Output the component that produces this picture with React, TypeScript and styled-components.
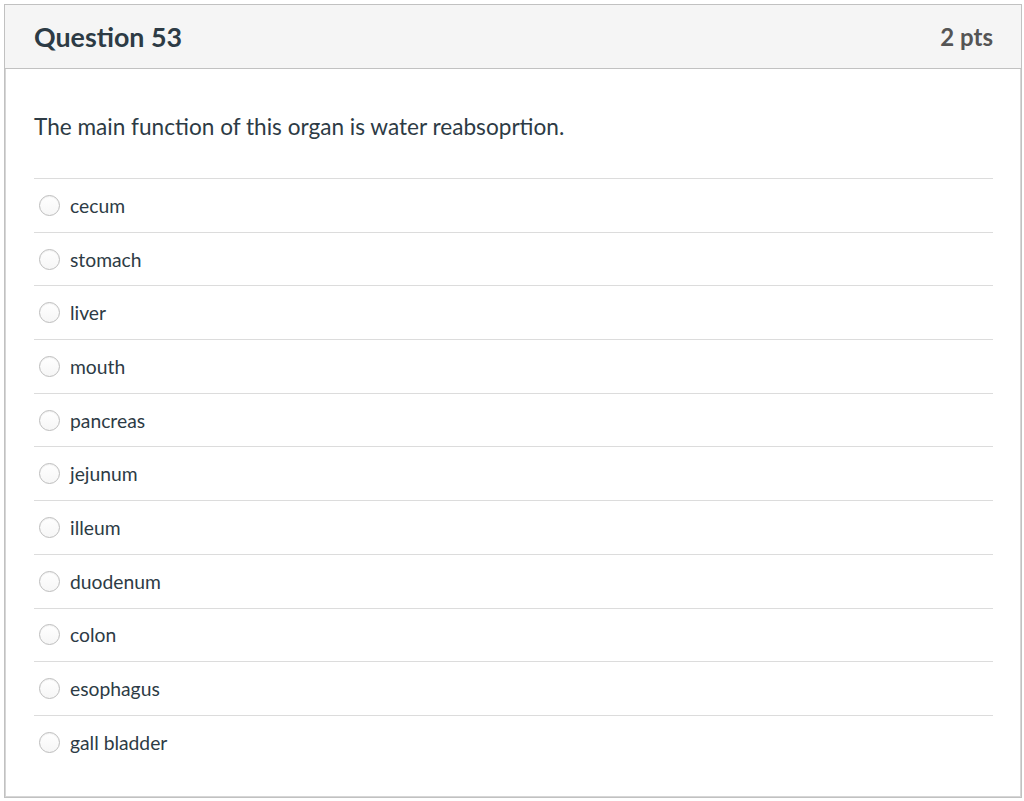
import styled, { createGlobalStyle } from "styled-components";

const GlobalStyle = createGlobalStyle`
    body {
        margin: 0;
        background: #fff;
        font-family: Lato, "Noto Sans", sans-serif;
    }
`;

const QuestionBox = styled.div`
    margin: 4px 2px 4px 4px;
    width: 1018px;
    height: 794px;
    box-sizing: border-box;
    border: 1px solid #c1c1c1;
    box-shadow: inset 0 0 0 1px #d6d6d6;
    display: flex;
    flex-direction: column;
`;

const Header = styled.div`
    height: 64px;
    box-sizing: border-box;
    background: #f5f5f5;
    border-bottom: 1px solid #c1c1c1;
    display: flex;
    align-items: center;
    justify-content: space-between;
    padding: 0 28px 0 29px;
`;

const Title = styled.h2`
    margin: 0;
    font-size: 26.8px;
    font-weight: 700;
    color: #2d3b45;
`;

const Points = styled.span`
    font-size: 24px;
    font-weight: 700;
    color: #555;
`;

const Body = styled.div`
    padding: 43px 28px 0 29px;
`;

const QuestionText = styled.p`
    margin: 0 0 36px;
    font-size: 22.6px;
    line-height: 30px;
    color: #2d3b45;
`;

const AnswerList = styled.div`
    display: flex;
    flex-direction: column;
`;

const AnswerRow = styled.label`
    height: 53.7px;
    box-sizing: border-box;
    border-top: 1px solid #dcdcdc;
    display: flex;
    align-items: center;
    gap: 10px;
    padding-left: 5px;
    font-size: 19.3px;
    color: #2d3b45;
`;

const Radio = styled.span`
    width: 19px;
    height: 19px;
    border-radius: 50%;
    border: 1px solid #bdbdbd;
    background: linear-gradient(#fff, #f6f6f6);
    box-shadow: inset 0 1px 1px rgba(0, 0, 0, 0.06);
    flex-shrink: 0;
`;

const answers = [
    "cecum",
    "stomach",
    "liver",
    "mouth",
    "pancreas",
    "jejunum",
    "illeum",
    "duodenum",
    "colon",
    "esophagus",
    "gall bladder",
];

export default function App() {
    return (
        <>
            <GlobalStyle />
            <QuestionBox>
                <Header>
                    <Title>Question 53</Title>
                    <Points>2 pts</Points>
                </Header>
                <Body>
                    <QuestionText>The main function of this organ is water reabsoprtion.</QuestionText>
                    <AnswerList>
                        {answers.map((a) => (
                            <AnswerRow key={a}>
                                <Radio />
                                {a}
                            </AnswerRow>
                        ))}
                    </AnswerList>
                </Body>
            </QuestionBox>
        </>
    );
}
